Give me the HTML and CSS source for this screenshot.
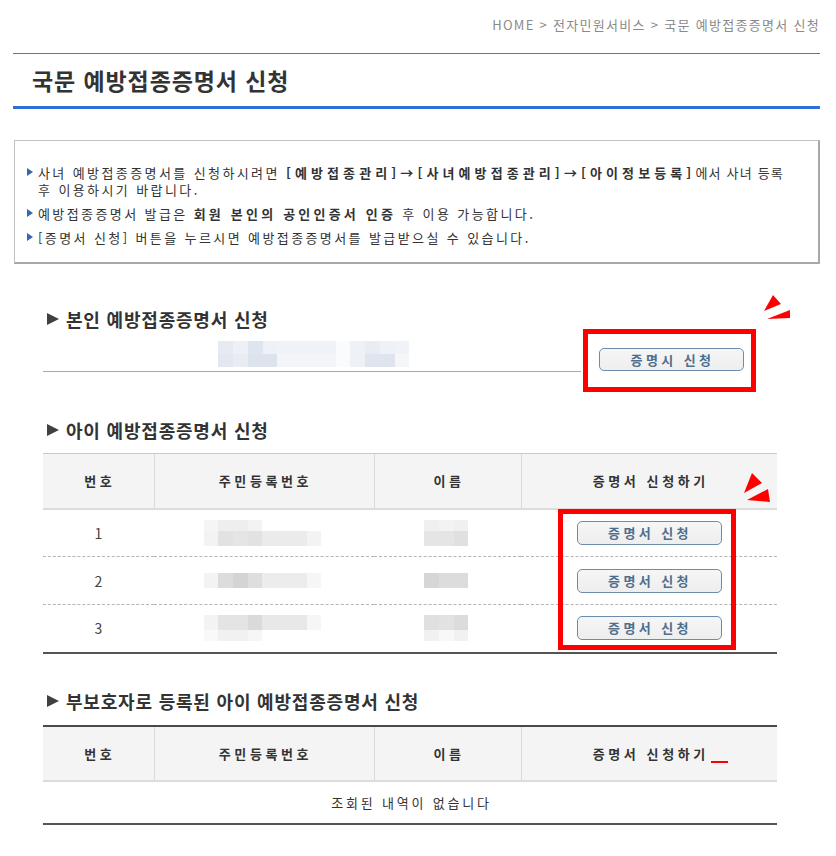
FILE: index.html
```html
<!DOCTYPE html>
<html lang="ko">
<head>
<meta charset="utf-8">
<title>국문 예방접종증명서 신청</title>
<link rel="stylesheet" href="styles.css">
</head>
<body>
<div class="page">
  <div class="breadcrumb">HOME &gt; 전자민원서비스 &gt; 국문 예방접종증명서 신청</div>
  <div class="title-bar"><h1>국문 예방접종증명서 신청</h1></div>

  <div class="notice">
    <ul>
      <li><span>사녀 예방접종증명서를 신청하시려면 <b>[예방접종관리]→[사녀예방접종관리]→[아이정보등록]</b><i class="tail">에서 사녀 등록</i><br>후 이용하시기 바랍니다.</span></li>
      <li><span>예방접종증명서 발급은 <b>회원 본인의 공인인증서 인증</b> 후 이용 가능합니다.</span></li>
      <li><span>[증명서 신청] 버튼을 누르시면 예방접종증명서를 발급받으실 수 있습니다.</span></li>
    </ul>
  </div>

  <div class="content">
    <section class="section s-self">
      <h2 class="sec-title"><svg class="tri" width="14" height="14" viewBox="0 0 14 14"><polygon points="1,1 13,7 1,13" fill="#404040"/></svg>본인 예방접종증명서 신청</h2>
      <div class="self-row">
        <div class="self-info">
          <div class="mosaic m-self"><div class="band b13 self-a"></div><div class="band b13 self-b"></div></div>
        </div>
        <button class="btn btn-self" type="button">증명시 신청</button>
        <div class="mark mark-self"></div>
      </div>
      <svg class="arrow arrow-1" width="30" height="30" viewBox="0 0 30 30"><polygon points="1,17 10,1 18,10" fill="#f00"/><polygon points="4,25 27,16 27,24" fill="#f00"/></svg>
    </section>

    <section class="section s-child">
      <h2 class="sec-title"><svg class="tri" width="14" height="14" viewBox="0 0 14 14"><polygon points="1,1 13,7 1,13" fill="#404040"/></svg>아이 예방접종증명서 신청</h2>
      <div class="table-wrap">
        <table class="grid grid-child">
          <colgroup><col class="c1"><col class="c2"><col class="c3"><col class="c4"></colgroup>
          <thead>
            <tr><th>번호</th><th>주민등록번호</th><th>이름</th><th>증명서 신청하기</th></tr>
          </thead>
          <tbody>
            <tr>
              <td class="num">1</td>
              <td class="blur"><div class="mosaic m-id"><div class="band b11 id1a"></div><div class="band b15 id1b"></div></div></td>
              <td class="blur"><div class="mosaic m-nm"><div class="band b11 nm1a"></div><div class="band b15 nm1b"></div></div></td>
              <td class="act"><button class="btn" type="button">증명서 신청</button></td>
            </tr>
            <tr>
              <td class="num">2</td>
              <td class="blur"><div class="mosaic m-id"><div class="band b15 id2"></div></div></td>
              <td class="blur"><div class="mosaic m-nm"><div class="band b15 nm2"></div></div></td>
              <td class="act"><button class="btn" type="button">증명서 신청</button></td>
            </tr>
            <tr>
              <td class="num">3</td>
              <td class="blur"><div class="mosaic m-id"><div class="band b15 id3a"></div><div class="band b11 id3b"></div></div></td>
              <td class="blur"><div class="mosaic m-nm"><div class="band b15 nm3a"></div><div class="band b11 nm3b"></div></div></td>
              <td class="act"><button class="btn" type="button">증명서 신청</button></td>
            </tr>
          </tbody>
        </table>
        <div class="mark mark-child"></div>
        <svg class="arrow arrow-2" width="30" height="32" viewBox="0 0 30 32"><polygon points="1,21 9,1 19,11" fill="#f00"/><polygon points="4,28 25,17 27,30" fill="#f00"/></svg>
      </div>
    </section>

    <section class="section s-guard">
      <h2 class="sec-title"><svg class="tri" width="14" height="14" viewBox="0 0 14 14"><polygon points="1,1 13,7 1,13" fill="#404040"/></svg>부보호자로 등록된 아이 예방접종증명서 신청</h2>
      <table class="grid grid-guard">
        <colgroup><col class="c1"><col class="c2"><col class="c3"><col class="c4"></colgroup>
        <thead>
          <tr><th>번호</th><th>주민등록번호</th><th>이름</th><th>증명서 신청하기<span class="uline"></span></th></tr>
        </thead>
        <tbody>
          <tr><td class="empty" colspan="4">조회된 내역이 없습니다</td></tr>
        </tbody>
      </table>
    </section>
  </div>
</div>
</body>
</html>
```

FILE: styles.css
```css
* { box-sizing: border-box; }

html, body {
  margin: 0;
  padding: 0;
  background: #fff;
}

body {
  font-family: "Noto Sans CJK KR", "Noto Sans", sans-serif;
  color: #333;
}

.page {
  width: 836px;
  padding: 0 16px 0 13px;
}

.breadcrumb {
  padding-top: 15px;
  height: 53px;
  line-height: 20px;
  text-align: right;
  font-size: 13px;
  color: #8a8a8a;
  letter-spacing: 1.3px;
}

.title-bar {
  border-top: 1px solid #3a7ae6;
  border-bottom: 3px solid #2f6ed8;
  height: 56px;
}

.title-bar h1 {
  margin: 0;
  padding-left: 19px;
  line-height: 52px;
  font-size: 23px;
  font-weight: 700;
  color: #333;
  letter-spacing: 0.9px;
}

.notice {
  margin: 31px 0 0 1px;
  border: 1px solid #c2c2c2;
  border-right: 2px solid #a8a8a8;
  border-bottom: 2px solid #a8a8a8;
  padding: 23px 10px 16px 12px;
}

.notice ul {
  list-style: none;
  margin: 0;
  padding: 0;
}

.notice li {
  display: flex;
  align-items: flex-start;
  font-size: 13px;
  line-height: 17px;
  letter-spacing: 2.4px;
  color: #333;
  white-space: nowrap;
}

.notice li + li {
  margin-top: 7px;
}

.notice li::before {
  content: "";
  flex: none;
  margin: 4px 5px 0 0;
  border-left: 6px solid #3566b3;
  border-top: 4.5px solid transparent;
  border-bottom: 4.5px solid transparent;
}

.notice b {
  font-weight: 700;
  letter-spacing: 3.2px;
}

.notice li:first-child b {
  letter-spacing: 4.1px;
}

.notice .tail {
  font-style: normal;
  letter-spacing: 1.2px;
}

.content {
  margin-left: 30px;
  width: 734px;
}

.section {
  position: relative;
}

.s-self { margin-top: 45px; }
.s-child { margin-top: 48px; }
.s-guard { margin-top: 37px; }

.sec-title {
  margin: 0;
  display: flex;
  align-items: center;
  height: 20px;
  padding-left: 3px;
  font-size: 18px;
  font-weight: 700;
  color: #333;
  letter-spacing: 0.8px;
}

.sec-title .tri {
  margin-right: 6px;
  flex: none;
}

/* self row */
.self-row {
  position: relative;
  display: flex;
  align-items: flex-start;
  height: 43px;
}

.self-info {
  width: 538px;
  height: 43px;
  padding: 10px 0 0 175px;
  border-bottom: 1px solid #a9a9a9;
}

.btn {
  width: 145px;
  height: 24px;
  border: 1px solid #6c8cab;
  border-radius: 5px;
  background: linear-gradient(#f6f6f6, #eeeeee);
  font-family: "Noto Sans CJK KR", sans-serif;
  font-size: 13px;
  font-weight: 700;
  color: #4e6e8e;
  letter-spacing: 3.4px;
  padding: 0 0 0 2px;
  line-height: 20px;
  cursor: pointer;
}

.btn-self {
  height: 23px;
  margin: 19px 0 0 18px;
}

.mark {
  position: absolute;
  border: 5px solid #ff0000;
}

.mark-self {
  left: 540px;
  top: 0;
  width: 173px;
  height: 63px;
}

.mark-child {
  left: 515px;
  top: 56px;
  width: 178px;
  height: 141px;
}

.arrow {
  position: absolute;
}

.arrow-1 { left: 720px; top: -15px; }
.arrow-2 { left: 700px; top: 19px; }

/* mosaics (blurred personal data) */
.mosaic { display: inline-block; vertical-align: middle; }
.band { height: 15px; }
.b11 { height: 11px; }
.b13 { height: 13px; }
.b15 { height: 15px; }

.m-self { width: 191px; }
.self-a {
  background: linear-gradient(to right,
    #e6eaf2 0 15px, #edf0f5 15px 30px, #dfe5ee 30px 45px, #eef1f6 45px 59px,
    #eff2f6 59px 118px, #fafbfc 118px 132px, #eef1f5 132px 147px,
    #e9edf3 147px 162px, #eef1f5 162px 177px, #eff2f6 177px 191px);
}
.self-b {
  background: linear-gradient(to right,
    #e2e7f0 0 15px, #e9edf3 15px 30px, #dde3ed 30px 59px,
    #f3f5f8 59px 118px, #fafbfc 118px 132px, #eef1f5 132px 147px,
    #dfe4ee 147px 177px, #f4f6f8 177px 191px);
}

.m-id { width: 117px; }
.m-nm { width: 44px; }

.id1a {
  background: linear-gradient(to right,
    #f5f5f5 0 14px, #eeeeee 14px 44px, #f3f3f3 44px 58px, transparent 58px 117px);
}
.id1b {
  background: linear-gradient(to right,
    #f3f3f3 0 14px, #e2e2e2 14px 29px, #e5e5e5 29px 44px, #e2e2e2 44px 58px,
    #ebebeb 58px 103px, #f3f3f3 103px 117px);
}
.id2 {
  background: linear-gradient(to right,
    #f3f3f3 0 14px, #dcdcdc 14px 29px, #d4d4d4 29px 44px, #dedede 44px 58px,
    #ececec 58px 103px, #f6f6f6 103px 117px);
}
.id3a {
  background: linear-gradient(to right,
    #f3f3f3 0 14px, #e4e4e4 14px 44px, #dadada 44px 58px,
    #e8e8e8 58px 103px, #f6f6f6 103px 117px);
}
.id3b {
  background: linear-gradient(to right,
    #f9f9f9 0 14px, #f1f1f1 14px 44px, #f6f6f6 44px 58px, transparent 58px 117px);
}
.nm1a { background: linear-gradient(to right, #f0f0f0 0 15px, #f3f3f3 15px 30px, #f0f0f0 30px 44px); }
.nm1b { background: linear-gradient(to right, #e5e5e5 0 30px, #e0e0e0 30px 44px); }
.nm2 { background: linear-gradient(to right, #d6d6d6 0 15px, #dcdcdc 15px 44px); }
.nm3a { background: linear-gradient(to right, #e0e0e0 0 15px, #e2e2e2 15px 30px, #dcdcdc 30px 44px); }
.nm3b { background: linear-gradient(to right, #f1f1f1 0 15px, #f8f8f8 15px 30px, #f1f1f1 30px 44px); }

/* tables */
.table-wrap {
  position: relative;
  margin-top: 13px;
}

.grid {
  width: 734px;
  border-collapse: collapse;
  table-layout: fixed;
}

.grid-guard { margin-top: 14px; }

.c1 { width: 111px; }
.c2 { width: 220px; }
.c3 { width: 147px; }
.c4 { width: 256px; }

.grid th {
  height: 55px;
  padding: 0 0 0 3px;
  background: #f4f4f4;
  border-bottom: 2px solid #dcdcdc;
  font-size: 13px;
  font-weight: 700;
  color: #333;
  letter-spacing: 3.6px;
  text-align: center;
}

.grid th + th {
  border-left: 1px solid #dadada;
}

.grid-child th { border-top: 1px solid #c9c9c9; }
.grid-guard th { border-top: 2px solid #4a4a4a; }

.grid td {
  height: 48px;
  padding: 0;
  border-bottom: 1px dashed #b5b5b5;
  font-size: 14px;
  color: #444;
}

.grid-child tbody tr:last-child td {
  border-bottom: 2px solid #555;
}

.grid td.num { text-align: center; }
.grid td.blur { padding-left: 50px; line-height: 0; }
.grid td.act { text-align: center; }

.grid td.empty {
  height: 43px;
  padding-left: 3px;
  text-align: center;
  font-size: 13px;
  letter-spacing: 2.8px;
  color: #333;
  border-bottom: 2px solid #555;
}

.uline {
  display: inline-block;
  width: 17px;
  height: 2px;
  margin-left: 2px;
  margin-right: -19px;
  vertical-align: -4px;
  background: #f00;
}
```
